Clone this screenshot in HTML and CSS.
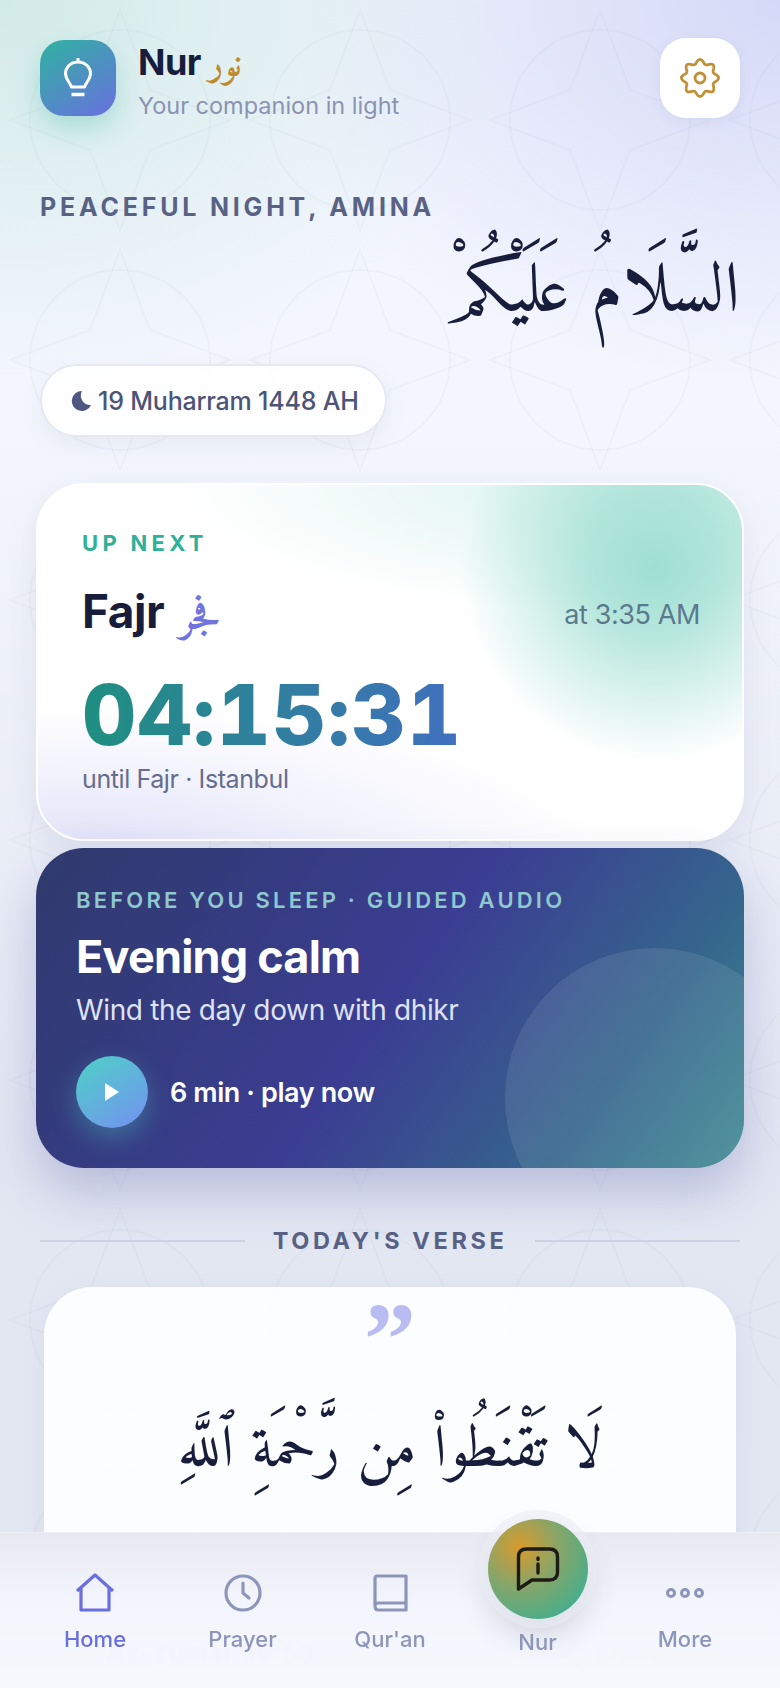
FILE: index.html
```html
<!DOCTYPE html>
<html lang="en">

<head>
    <meta charset="UTF-8">
    <meta name="viewport" content="width=device-width, initial-scale=1.0">
    <title>Nur</title>
    <link rel="stylesheet" href="styles.css">
</head>

<body>
    <div class="screen">
        <svg class="pattern" width="780" height="1688" aria-hidden="true">
            <defs>
                <pattern id="star-tile" width="240" height="240" patternUnits="userSpaceOnUse">
                    <circle cx="120" cy="120" r="90" />
                    <path d="M120 10 L150 90 L230 120 L150 150 L120 230 L90 150 L10 120 L90 90 Z" />
                </pattern>
            </defs>
            <rect width="780" height="1688" fill="url(#star-tile)" />
        </svg>

        <main class="content">
            <header class="top-bar">
                <div class="brand">
                    <div class="logo">
                        <svg width="40" height="44" viewBox="0 0 40 44" fill="none" stroke="#fff" stroke-width="3">
                            <path d="M20 6 C12.5 6 7.500 11.500 7.500 17.500 C7.500 23 11.500 25.500 13.500 31 H26.500 C28.500 25.500 32.500 23 32.500 17.500 C32.500 11.500 27.500 6 20 6 Z M20 2 V6" stroke-linejoin="round" />
                            <path d="M13.500 38.500 H26.500" stroke-width="3.500" />
                        </svg>
                    </div>
                    <div class="brand-text">
                        <div class="brand-name">Nur <span class="brand-arabic" lang="ar">نور</span></div>
                        <div class="brand-sub">Your companion in light</div>
                    </div>
                </div>
                <div class="settings">
                    <svg width="46" height="46" viewBox="-23 -23 46 46" fill="none" stroke="#c18f35" stroke-width="2.800">
                        <path d="M-3.220 -16.190 Q0 -21 3.220 -16.190 Q4.780 -11.550 9.170 -13.720 Q14.850 -14.850 13.720 -9.170 Q11.550 -4.780 16.190 -3.220 Q21 0 16.190 3.220 Q11.550 4.780 13.720 9.170 Q14.850 14.850 9.170 13.720 Q4.780 11.550 3.220 16.190 Q0 21 -3.220 16.190 Q-4.780 11.550 -9.170 13.720 Q-14.850 14.850 -13.720 9.170 Q-11.550 4.780 -16.190 3.220 Q-21 0 -16.190 -3.220 Q-11.550 -4.780 -13.720 -9.170 Q-14.850 -14.850 -9.170 -13.720 Q-4.780 -11.550 -3.220 -16.190 Z" />
                        <circle r="5" />
                    </svg>
                </div>
            </header>

            <div class="greeting">PEACEFUL NIGHT, AMINA</div>
            <div class="salam" lang="ar" dir="rtl">السَّلَامُ عَلَيْكُمْ</div>

            <div class="date-pill">
                <svg width="22" height="22" viewBox="0 0 22 22">
                    <path d="M12 1 A10 10 0 1 0 21 15 A9.500 9.500 0 0 1 12 1 Z" fill="#4f5882" />
                </svg>
                <span>19 Muharram 1448 AH</span>
            </div>

            <section class="next-card">
                <div class="next-label">UP NEXT</div>
                <div class="next-row">
                    <div class="next-name">Fajr <span class="next-arabic" lang="ar">فجر</span></div>
                    <div class="next-time">at 3:35 AM</div>
                </div>
                <div class="countdown">04:15:31</div>
                <div class="next-place">until Fajr · Istanbul</div>
            </section>

            <section class="audio-card">
                <div class="audio-circle"></div>
                <div class="audio-label">BEFORE YOU SLEEP · GUIDED AUDIO</div>
                <h2 class="audio-title">Evening calm</h2>
                <div class="audio-sub">Wind the day down with dhikr</div>
                <div class="audio-row">
                    <div class="play-btn">
                        <svg width="16" height="20" viewBox="0 0 16 20"><path d="M1 1 L15 10 L1 19 Z" fill="#fff" /></svg>
                    </div>
                    <span>6 min · play now</span>
                </div>
            </section>

            <div class="section-title">
                <span class="section-line"></span>
                <span>TODAY'S VERSE</span>
                <span class="section-line"></span>
            </div>

            <section class="verse-card">
                <div class="verse-quote">”</div>
                <div class="verse-text" lang="ar" dir="rtl">لَا تَقْنَطُوا۟ مِن رَّحْمَةِ ٱللَّهِ</div>
                <div class="verse-foot">
                    <span>Az-Zumar 39:53</span>
                    <span class="verse-share">
                        <svg width="30" height="30" viewBox="0 0 24 24" fill="none" stroke="#9a8f70" stroke-width="2">
                            <circle cx="18" cy="5" r="3" />
                            <circle cx="6" cy="12" r="3" />
                            <circle cx="18" cy="19" r="3" />
                            <path d="M8.600 10.500 L15.400 6.500 M8.600 13.500 L15.400 17.500" />
                        </svg>
                        Share
                    </span>
                </div>
            </section>
        </main>

        <nav class="tab-bar">
            <div class="tab tab-active">
                <svg width="40" height="40" viewBox="0 0 40 40" fill="none" stroke="#6a6fe0" stroke-width="3.200" stroke-linejoin="round">
                    <path d="M2 18 L20 2 L38 18 M6 15 V37 H34 V15" />
                </svg>
                <span>Home</span>
            </div>
            <div class="tab">
                <svg width="40" height="40" viewBox="0 0 40 40" fill="none" stroke="#8e95bb" stroke-width="3.200" stroke-linecap="round" stroke-linejoin="round">
                    <circle cx="20" cy="20" r="17" />
                    <path d="M20 10 V20 L26 25" />
                </svg>
                <span>Prayer</span>
            </div>
            <div class="tab">
                <svg width="40" height="40" viewBox="0 0 40 40" fill="none" stroke="#8e95bb" stroke-width="3.200" stroke-linejoin="round">
                    <path d="M5 33 V5 Q5 3 7 3 H36 V37 H8 Q5 37 5 33 Q5 30 8 30 H36" />
                </svg>
                <span>Qur'an</span>
            </div>
            <div class="tab tab-nur">
                <div class="nur-btn">
                    <svg width="44" height="46" viewBox="0 0 44 46" fill="none" stroke="#1d1b14" stroke-width="3.400" stroke-linejoin="round">
                        <path d="M2.500 43 V11 Q2.500 3 10.500 3 H33.500 Q41.500 3 41.500 11 V26 Q41.500 34 33.500 34 H16 Z" />
                        <path d="M22 12 V13.500 M22 18 V27" stroke-linecap="round" />
                    </svg>
                </div>
                <span>Nur</span>
            </div>
            <div class="tab">
                <svg width="40" height="40" viewBox="0 0 40 40" fill="none" stroke="#8e95bb" stroke-width="3">
                    <circle cx="6" cy="20" r="3.500" />
                    <circle cx="20" cy="20" r="3.500" />
                    <circle cx="34" cy="20" r="3.500" />
                </svg>
                <span>More</span>
            </div>
        </nav>
    </div>
</body>

</html>
```

FILE: styles.css
```css
* {
    box-sizing: border-box;
}

body {
    margin: 0;
    font-family: Inter, 'Noto Sans', sans-serif;
}

.screen {
    position: relative;
    width: 780px;
    height: 1688px;
    overflow: hidden;
    background:
        radial-gradient(ellipse 520px 380px at 0 0, #d2ebe8 0, rgba(210, 235, 232, 0) 100%),
        radial-gradient(ellipse 520px 380px at 100% 0, #d5d9f7 0, rgba(213, 217, 247, 0) 100%),
        linear-gradient(to bottom, #f2f5fd 0, #f3f6fd 420px, #e3e7f2 1150px, #e2e7f2 1688px);
}

.pattern {
    position: absolute;
    top: 0;
    left: 0;
}

.pattern circle,
.pattern path {
    fill: none;
    stroke: #5a6390;
    stroke-opacity: 0.035;
    stroke-width: 2;
}

.content {
    position: relative;
    padding: 38px 36px 0;
}

.top-bar {
    display: flex;
    justify-content: space-between;
    align-items: flex-start;
    padding: 0 4px;
}

.brand {
    display: flex;
    gap: 22px;
    margin-top: 2px;
}

.brand-text {
    padding-top: 2px;
}

.logo {
    width: 76px;
    height: 76px;
    border-radius: 24px;
    background: linear-gradient(145deg, #2fb3a0, #6a6fe0);
    box-shadow: 0 12px 26px rgba(47, 179, 160, 0.3);
    display: flex;
    align-items: center;
    justify-content: center;
}

.brand-name {
    font-size: 36px;
    line-height: 40px;
    font-weight: 700;
    color: #171d3a;
    letter-spacing: -0.5px;
}

.brand-arabic {
    font-family: Amiri, 'Scheherazade New', 'Noto Naskh Arabic', 'DejaVu Serif', serif;
    font-size: 35px;
    font-weight: 700;
    color: #c18a2e;
}

.brand-sub {
    font-size: 23.500px;
    line-height: 32px;
    color: #8b93b3;
    margin-top: 3px;
}

.settings {
    width: 80px;
    height: 80px;
    border-radius: 26px;
    background: #fff;
    border: 2px solid rgba(255, 255, 255, 0.7);
    box-shadow: 0 4px 14px rgba(90, 99, 144, 0.08);
    display: flex;
    align-items: center;
    justify-content: center;
}

.greeting {
    margin: 70px 0 0 4px;
    font-size: 25px;
    line-height: 30px;
    font-weight: 700;
    letter-spacing: 3.800px;
    color: #596285;
}

.salam {
    margin-top: 20px;
    padding-right: 4px;
    font-family: Amiri, 'Scheherazade New', 'Noto Naskh Arabic', 'DejaVu Serif', serif;
    font-size: 71px;
    line-height: 104px;
    color: #171d3a;
    text-align: right;
}

.date-pill {
    display: inline-flex;
    align-items: center;
    gap: 6px;
    margin: 18px 0 0 4px;
    height: 73px;
    padding: 0 26px 0 28px;
    border-radius: 37px;
    background: rgba(255, 255, 255, 0.85);
    border: 2px solid #e6e8f2;
    box-shadow: 0 8px 22px rgba(90, 99, 144, 0.08);
    font-size: 25px;
    font-weight: 500;
    letter-spacing: -0.2px;
    color: #4c5478;
}

.next-card {
    position: relative;
    margin: 46px 0 0;
    height: 358px;
    padding: 43px 42px 0 44px;
    border-radius: 48px;
    border: 2px solid #fff;
    background:
        radial-gradient(circle at 617px 82px, #9fdfd2 0, rgba(159, 223, 210, 0.75) 70px, rgba(159, 223, 210, 0) 195px),
        radial-gradient(ellipse 480px 130px at 620px 0, rgba(159, 223, 210, 0.4) 0, rgba(159, 223, 210, 0) 100%),
        radial-gradient(ellipse 520px 150px at 40px 370px, #dfe0f8 0, rgba(223, 224, 248, 0.45) 50%, rgba(223, 224, 248, 0) 100%),
        #fff;
    box-shadow: 0 10px 30px rgba(90, 99, 144, 0.1);
}

.next-label {
    font-size: 22px;
    line-height: 30px;
    font-weight: 700;
    letter-spacing: 4.300px;
    color: #2fb09a;
}

.next-row {
    display: flex;
    justify-content: space-between;
    align-items: center;
    margin-top: 21px;
}

.next-name {
    font-size: 46px;
    line-height: 64px;
    font-weight: 700;
    color: #171d3a;
    letter-spacing: -0.5px;
}

.next-arabic {
    font-family: Amiri, 'Scheherazade New', 'Noto Naskh Arabic', 'DejaVu Serif', serif;
    font-size: 41px;
    font-weight: 700;
    color: #6f74e0;
    margin-left: 5px;
}

.next-time {
    font-size: 27px;
    color: #5a7a8e;
    letter-spacing: -0.4px;
}

.countdown {
    margin-top: 17px;
    font-size: 84px;
    line-height: 96px;
    font-weight: 800;
    font-variant-numeric: tabular-nums;
    letter-spacing: 1.200px;
    width: 376px;
    white-space: nowrap;
    background: linear-gradient(90deg, #1f8f80, #4070bd);
    -webkit-background-clip: text;
    background-clip: text;
    color: transparent;
}

.next-place {
    margin-top: -1px;
    font-size: 25px;
    line-height: 34px;
    letter-spacing: -0.4px;
    color: #666c8c;
}

.audio-card {
    position: relative;
    overflow: hidden;
    margin-top: 7px;
    height: 320px;
    padding: 38px 40px 0;
    border-radius: 48px;
    color: #fff;
    background: linear-gradient(125deg, #2f3a6c 0, #3b3d92 50%, #35678c 80%, #3f8a94 100%);
    box-shadow: 0 24px 50px rgba(59, 61, 146, 0.25);
}

.audio-circle {
    position: absolute;
    left: 469px;
    top: 100px;
    width: 300px;
    height: 300px;
    border-radius: 50%;
    background: rgba(255, 255, 255, 0.09);
}

.audio-label {
    font-size: 22px;
    line-height: 28px;
    font-weight: 600;
    letter-spacing: 3.200px;
    color: #8fc8cf;
    white-space: nowrap;
}

.audio-title {
    margin: 15px 0 0;
    font-size: 45px;
    line-height: 56px;
    font-weight: 700;
    letter-spacing: -0.8px;
}

.audio-sub {
    margin-top: 6px;
    font-size: 28px;
    line-height: 38px;
    letter-spacing: -0.35px;
    color: #dfe2f5;
}

.audio-row {
    position: relative;
    display: flex;
    align-items: center;
    gap: 22px;
    margin-top: 27px;
    font-size: 27px;
    font-weight: 600;
    letter-spacing: -0.4px;
}

.play-btn {
    width: 72px;
    height: 72px;
    border-radius: 50%;
    background: linear-gradient(145deg, #4ed2c6, #7490f2);
    box-shadow: 0 10px 26px rgba(78, 210, 198, 0.35);
    display: flex;
    align-items: center;
    justify-content: center;
}

.section-title {
    display: flex;
    align-items: center;
    gap: 28px;
    margin: 58px 4px 0;
    font-size: 23.500px;
    line-height: 30px;
    font-weight: 700;
    letter-spacing: 3.600px;
    color: #596285;
    white-space: nowrap;
}

.section-line {
    flex: 1;
    height: 2px;
    background: #cdd3e4;
}

.verse-card {
    margin: 31px 8px 0;
    padding-top: 4px;
    height: 560px;
    border-radius: 48px;
    background: rgba(255, 255, 255, 0.9);
    box-shadow: 0 8px 26px rgba(90, 99, 144, 0.08);
}

.verse-quote {
    font-family: 'Liberation Serif', serif;
    font-weight: 700;
    font-size: 104px;
    line-height: 96px;
    height: 66px;
    text-align: center;
    color: #b8bcf0;
}

.verse-text {
    margin-top: 45px;
    font-family: Amiri, 'Scheherazade New', 'Noto Naskh Arabic', 'DejaVu Serif', serif;
    font-size: 59px;
    line-height: 100px;
    color: #171d3a;
    text-align: center;
    white-space: nowrap;
}

.verse-foot {
    display: flex;
    justify-content: space-between;
    margin-top: 136px;
    padding: 0 70px 0 62px;
    font-size: 26px;
    font-weight: 600;
    color: #5d6590;
}

.verse-share {
    display: flex;
    align-items: center;
    gap: 8px;
    color: #9a8f70;
}

.tab-bar {
    position: absolute;
    left: 0;
    right: 0;
    bottom: 0;
    height: 156px;
    display: grid;
    grid-template-columns: repeat(5, 147.500px);
    justify-content: center;
    background: linear-gradient(to bottom, rgba(232, 233, 240, 0.975), rgba(243, 245, 252, 0.975) 45%, rgba(246, 248, 254, 0.975));
    backdrop-filter: blur(2px);
    border-top: 1px solid #eceef5;
}

.tab {
    display: flex;
    flex-direction: column;
    align-items: center;
    padding-top: 40px;
    gap: 12px;
    font-size: 22px;
    line-height: 28px;
    font-weight: 500;
    color: #8e95bb;
}

.tab-active {
    color: #6a6fe0;
}

.tab-nur {
    padding-top: 0;
    gap: 9px;
}

.nur-btn {
    width: 100px;
    height: 100px;
    margin-top: -14px;
    border-radius: 50%;
    background: radial-gradient(circle at 32% 28%, #d99a2c 0, #8aa567 38%, #36b095 90%);
    box-shadow: 0 0 0 9px rgba(235, 237, 245, 0.6), 0 16px 30px rgba(60, 65, 90, 0.2);
    display: flex;
    align-items: center;
    justify-content: center;
}
```
